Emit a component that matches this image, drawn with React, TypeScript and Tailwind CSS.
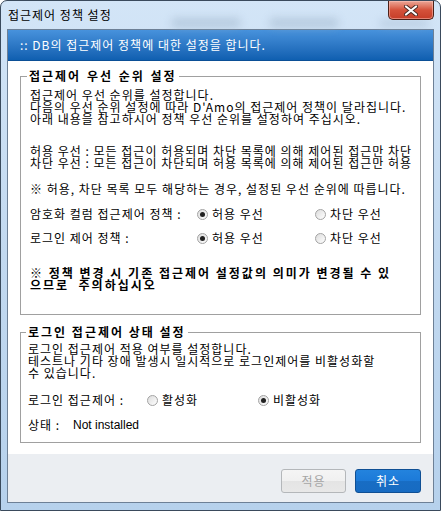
import React from "react";

function Radio({ checked }: { checked?: boolean }) {
  return (
    <span className="flex h-[11px] w-[11px] shrink-0 items-center justify-center rounded-full border border-[#a3a3a3] bg-gradient-to-br from-[#dcdcdc] to-white">
      {checked && <span className="h-[5px] w-[5px] rounded-full bg-[#222]" />}
    </span>
  );
}

function Option({ checked, label, width }: { checked?: boolean; label: string; width: string }) {
  return (
    <div className={`flex items-center gap-[4px] ${width}`}>
      <Radio checked={checked} />
      <span>{label}</span>
    </div>
  );
}

export default function App() {
  return (
    <div className="flex h-[511px] w-[441px] flex-col overflow-hidden whitespace-nowrap rounded-t-[7px] border border-[#3a4a5c] bg-gradient-to-b from-[#d3e5f7] via-[#c2d9f0] to-[#b6d1ec] font-['Noto_Sans_CJK_KR','Noto_Sans',sans-serif] text-[12px] leading-[12px] tracking-[1px] text-black">
      {/* title bar */}
      <div className="relative flex h-[28px] shrink-0 items-center justify-between pl-[7px]">
        <span className="pointer-events-none absolute left-[170px] top-[17px] h-[10px] w-[70px] rounded-full bg-[#8fa6bd] opacity-40 blur-[4px]" />
        <span className="pointer-events-none absolute left-[268px] top-[17px] h-[10px] w-[70px] rounded-full bg-[#8fa6bd] opacity-40 blur-[4px]" />
        <span className="pointer-events-none absolute left-[378px] top-[18px] h-[9px] w-[50px] rounded-full bg-[#8fa6bd] opacity-30 blur-[4px]" />
        <span className="relative text-[12px] leading-[14px]">접근제어 정책 설정</span>
        <div className="relative mr-[6px] flex h-[19px] w-[46px] self-start items-center justify-center rounded-b-[5px] border border-t-0 border-[#4b2018] bg-gradient-to-b from-[#eaa697] via-[#d4513a] to-[#c63d28] shadow-[inset_0_0_0_1px_rgba(255,200,190,0.5)]">
          <svg width="14" height="11" viewBox="0 0 14 11">
            <path d="M2 1.5 L12 9.5 M12 1.5 L2 9.5" stroke="#4a2a24" strokeWidth="4" strokeLinecap="round" />
            <path d="M2 1.5 L12 9.5 M12 1.5 L2 9.5" stroke="#fff" strokeWidth="2.2" strokeLinecap="round" />
          </svg>
        </div>
      </div>

      {/* client area */}
      <div className="mx-[6px] mb-[7px] flex flex-1 flex-col border border-[#6d8096] bg-white">
        <div className="flex h-[31px] shrink-0 items-center border-b border-[#0b4f96] bg-gradient-to-b from-[#4792dc] to-[#0f5fb0] pl-[12px] text-white">
          :: DB의 접근제어 정책에 대한 설정을 합니다.
        </div>

        <fieldset className="mx-[12px] mt-[8px] min-w-0 border border-[#a0a0a0]">
          <legend className="ml-[6px] px-[2px] text-[12px] font-bold leading-[14px] tracking-[2px] [word-spacing:1px]">접근제어 우선 순위 설정</legend>
          <div className="pb-[23px] pl-[9px] pt-[6px]">
            <div>
              <div>접근제어 우선 순위를 설정합니다.</div>
              <div>다음의 우선 순위 설정에 따라 D'Amo의 접근제어 정책이 달라집니다.</div>
              <div>아래 내용을 참고하시어 정책 우선 순위를 설정하여 주십시오.</div>
            </div>
            <div className="mt-[20px]">
              <div>허용 우선 : 모든 접근이 허용되며 차단 목록에 의해 제어된 접근만 차단</div>
              <div>차단 우선 : 모든 접근이 차단되며 허용 목록에 의해 제어된 접근만 허용</div>
            </div>
            <div className="mt-[14px]">※ 허용, 차단 목록 모두 해당하는 경우, 설정된 우선 순위에 따릅니다.</div>
            <div className="mt-[11px] flex h-[16px] items-center">
              <span className="w-[167px]">암호화 컬럼 접근제어 정책 :</span>
              <Option checked label="허용 우선" width="w-[118px]" />
              <Option label="차단 우선" width="w-[100px]" />
            </div>
            <div className="mt-[8px] flex h-[16px] items-center">
              <span className="w-[167px]">로그인 제어 정책 :</span>
              <Option checked label="허용 우선" width="w-[118px]" />
              <Option label="차단 우선" width="w-[100px]" />
            </div>
            <div className="mt-[21px] font-bold tracking-[2px]">
              <div>※ 정책 변경 시 기존 접근제어 설정값의 의미가 변경될 수 있</div>
              <div>으므로&nbsp; 주의하십시오</div>
            </div>
          </div>
        </fieldset>

        <fieldset className="mx-[12px] mt-[10px] min-w-0 border border-[#a0a0a0]">
          <legend className="ml-[5px] px-[2px] text-[12px] font-bold leading-[14px] tracking-[2px]">로그인 접근제어 상태 설정</legend>
          <div className="pb-[9px] pl-[7px] pt-[4px]">
            <div>
              <div>로그인 접근제어 적용 여부를 설정합니다.</div>
              <div>테스트나 기타 장애 발생시 일시적으로 로그인제어를 비활성화할</div>
              <div>수 있습니다.</div>
            </div>
            <div className="mt-[13px] flex h-[16px] items-center">
              <span className="w-[119px]">로그인 접근제어 :</span>
              <Option label="활성화" width="w-[111px]" />
              <Option checked label="비활성화" width="w-[100px]" />
            </div>
            <div className="mt-[9px] flex h-[16px] items-center">
              <span className="w-[45px]">상태 :</span>
              <span className="font-['Liberation_Sans',sans-serif] tracking-normal">Not installed</span>
            </div>
          </div>
        </fieldset>

        <div className="mt-[11px] flex flex-1 items-start justify-end gap-[9px] bg-[#ebeef2] pr-[12px] pt-[15px]">
          <button className="h-[24px] w-[65px] rounded-[3px] border border-[#b4b7ba] bg-[linear-gradient(#f5f5f5_0%,#f0f0f0_50%,#e4e4e4_50%,#e8e8e8_100%)] text-[#a5a5a5]">
            적용
          </button>
          <button className="h-[24px] w-[66px] rounded-[3px] border border-[#0f4f94] bg-[linear-gradient(#2383de_0%,#1c7ad8_50%,#186dc4_50%,#176bc2_100%)] text-white">
            취소
          </button>
        </div>
      </div>
    </div>
  );
}
